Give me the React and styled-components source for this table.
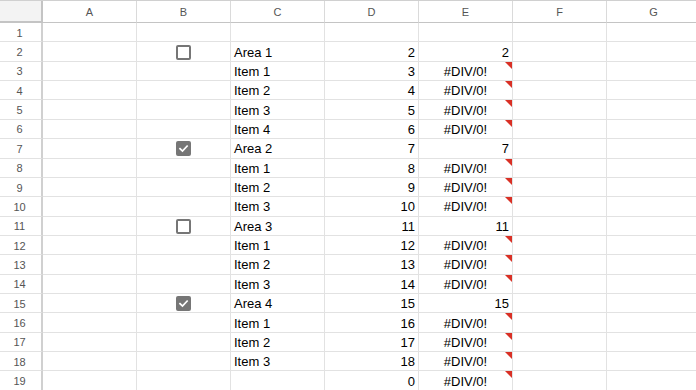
import React from "react";
import styled, { createGlobalStyle, css } from "styled-components";

const GlobalStyle = createGlobalStyle`
  html, body {
    margin: 0;
    padding: 0;
    background: #fff;
    overflow: hidden;
  }
  * {
    box-sizing: border-box;
  }
`;

const COLS = ["A", "B", "C", "D", "E", "F", "G"];

const Sheet = styled.div`
  display: grid;
  grid-template-columns: 43px repeat(7, 94px);
  grid-template-rows: 22px repeat(19, 19.37px);
  width: 701px;
  font-family: "Liberation Sans", Arial, sans-serif;
  border-top: 1px solid #d0d0d0;
`;

const Corner = styled.div`
  background: #f3f3f3;
  border-right: 2px solid #c4c4c4;
  border-bottom: 2px solid #c4c4c4;
`;

const ColHeader = styled.div`
  display: flex;
  align-items: center;
  justify-content: center;
  font-size: 11px;
  color: #555;
  background: #fff;
  border-right: 1px solid #dadada;
  border-bottom: 1px solid #c4c4c4;
`;

const RowHeader = styled.div`
  display: flex;
  align-items: center;
  justify-content: center;
  font-size: 11px;
  color: #555;
  padding: 1px 2px 0 0;
  background: #fff;
  border-right: 2px solid #d0d0d0;
  border-bottom: 1px solid #e2e2e2;
`;

const Cell = styled.div`
  position: relative;
  display: flex;
  align-items: center;
  padding: 1px 3px 0;
  font-size: 13px;
  color: #000;
  white-space: nowrap;
  border-right: 1px solid #e2e2e2;
  border-bottom: 1px solid #e2e2e2;
  justify-content: ${(p) =>
    p.$align === "right" ? "flex-end" : p.$align === "center" ? "center" : "flex-start"};

  ${(p) =>
    p.$error &&
    css`
      &::after {
        content: "";
        position: absolute;
        top: 0;
        right: 0;
        border-top: 7px solid #d93025;
        border-left: 7px solid transparent;
      }
    `}
`;

const Box = styled.span`
  display: inline-flex;
  align-items: center;
  justify-content: center;
  width: 15px;
  height: 15px;
  border-radius: 2px;
  border: 2px solid #767676;
  background: ${(p) => (p.$checked ? "#767676" : "#fff")};
`;

const Checkbox = ({ checked }) => (
  <Box $checked={checked}>
    {checked && (
      <svg width="11" height="11" viewBox="0 0 12 12">
        <path
          d="M2.2 6.2 L4.9 8.8 L9.9 3.4"
          fill="none"
          stroke="#fff"
          strokeWidth="1.9"
          strokeLinecap="square"
        />
      </svg>
    )}
  </Box>
);

const rows = [
  {},
  { box: false, name: "Area 1", d: 2, e: 2 },
  { name: "Item 1", d: 3 },
  { name: "Item 2", d: 4 },
  { name: "Item 3", d: 5 },
  { name: "Item 4", d: 6 },
  { box: true, name: "Area 2", d: 7, e: 7 },
  { name: "Item 1", d: 8 },
  { name: "Item 2", d: 9 },
  { name: "Item 3", d: 10 },
  { box: false, name: "Area 3", d: 11, e: 11 },
  { name: "Item 1", d: 12 },
  { name: "Item 2", d: 13 },
  { name: "Item 3", d: 14 },
  { box: true, name: "Area 4", d: 15, e: 15 },
  { name: "Item 1", d: 16 },
  { name: "Item 2", d: 17 },
  { name: "Item 3", d: 18 },
  { name: "", d: 0 },
];

const App = () => (
  <>
    <GlobalStyle />
    <Sheet>
      <Corner />
      {COLS.map((c) => (
        <ColHeader key={c}>{c}</ColHeader>
      ))}
      {rows.map((r, i) => {
        const hasData = r.d !== undefined;
        const isError = hasData && r.e === undefined;
        return (
          <React.Fragment key={i}>
            <RowHeader>{i + 1}</RowHeader>
            <Cell />
            <Cell $align="center">
              {r.box !== undefined && <Checkbox checked={r.box} />}
            </Cell>
            <Cell>{r.name}</Cell>
            <Cell $align="right">{hasData ? r.d : ""}</Cell>
            {hasData ? (
              isError ? (
                <Cell $align="center" $error>
                  #DIV/0!
                </Cell>
              ) : (
                <Cell $align="right">{r.e}</Cell>
              )
            ) : (
              <Cell />
            )}
            <Cell />
            <Cell />
          </React.Fragment>
        );
      })}
    </Sheet>
  </>
);

export default App;
